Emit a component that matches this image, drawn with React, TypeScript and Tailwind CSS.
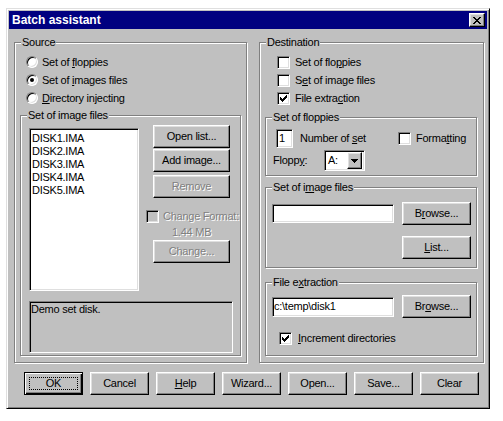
import React from "react";

const raised =
  "bg-[#c0c0c0] border border-t-white border-l-white border-r-black border-b-black shadow-[inset_-1px_-1px_0_#808080,inset_1px_1px_0_#dfdfdf]";
const sunken =
  "border border-t-[#808080] border-l-[#808080] border-r-white border-b-white shadow-[inset_1px_1px_0_#000,inset_-1px_-1px_0_#dfdfdf]";
const disabledText = "text-[#808080] [text-shadow:1px_1px_0_#fff]";

function Btn({
  children,
  className = "",
  disabled = false,
}: {
  children: React.ReactNode;
  className?: string;
  disabled?: boolean;
}) {
  return (
    <div
      className={`flex items-center justify-center ${raised} ${
        disabled ? disabledText : "text-black"
      } ${className}`}
    >
      {children}
    </div>
  );
}

function Group({
  label,
  className = "",
  children,
}: {
  label: React.ReactNode;
  className?: string;
  children?: React.ReactNode;
}) {
  return (
    <div
      className={`relative border border-[#808080] shadow-[1px_1px_0_#fff,inset_1px_1px_0_#fff] ${className}`}
    >
      <span className="absolute left-[6px] -top-[7px] px-[1px] bg-[#c0c0c0] leading-[13px] whitespace-nowrap">
        {label}
      </span>
      {children}
    </div>
  );
}

function Check({ checked = false, disabled = false }: { checked?: boolean; disabled?: boolean }) {
  return (
    <div
      className={`w-[13px] h-[13px] shrink-0 flex items-center justify-center ${sunken} ${
        disabled ? "bg-[#c0c0c0]" : "bg-white"
      }`}
    >
      {checked && (
        <svg width="7" height="7" viewBox="0 0 7 7" shapeRendering="crispEdges">
          <path
            fill="#000"
            d="M6 0h1v1h-1z M5 1h2v1h-2z M0 2h1v1h-1z M4 2h3v1h-3z M0 3h2v1h-2z M3 3h3v1h-3z M0 4h5v1h-5z M1 5h3v1h-3z M2 6h1v1h-1z"
          />
        </svg>
      )}
    </div>
  );
}

function Radio({ checked = false }: { checked?: boolean }) {
  return (
    <div className="w-[12px] h-[12px] shrink-0 rounded-full bg-white border border-t-[#808080] border-l-[#808080] border-r-white border-b-white shadow-[inset_1px_1px_0_#000,inset_-1px_-1px_0_#dfdfdf] flex items-center justify-center">
      {checked && <div className="w-[4px] h-[4px] rounded-full bg-black" />}
    </div>
  );
}

function U({ children }: { children: React.ReactNode }) {
  return <span className="underline underline-offset-[1px]">{children}</span>;
}

export default function App() {
  return (
    <div className="w-[503px] h-[421px] bg-white pt-[8px] pl-[6px] font-['Liberation_Sans',Arial,sans-serif] text-[11px] leading-[13px] tracking-[-0.25px] text-black">
      <div className="w-[484px] h-[401px] bg-[#c0c0c0] border border-t-[#dfdfdf] border-l-[#dfdfdf] border-r-black border-b-black shadow-[inset_1px_1px_0_#fff,inset_-1px_-1px_0_#808080] p-[2px] flex flex-col">
        {/* Title bar */}
        <div className="h-[18px] bg-[#000080] flex items-center justify-between pl-[3px]">
          <span className="text-white font-bold text-[12px] leading-[14px] tracking-normal">Batch assistant</span>
          <div className={`w-[16px] h-[14px] mr-[2px] flex items-center justify-center ${raised}`}>
            <svg width="8" height="7" viewBox="0 0 8 7" shapeRendering="crispEdges">
              <path
                fill="#000"
                d="M0 0h2v1h-2z M6 0h2v1h-2z M1 1h2v1h-2z M5 1h2v1h-2z M2 2h4v1h-4z M3 3h2v1h-2z M2 4h4v1h-4z M1 5h2v1h-2z M5 5h2v1h-2z M0 6h2v1h-2z M6 6h2v1h-2z"
              />
            </svg>
          </div>
        </div>

        {/* Main area */}
        <div className="flex mt-[13px] ml-[5px]">
          {/* Source */}
          <Group label="Source" className="w-[233px] h-[321px]">
            <div className="flex flex-col pt-[10px] pl-[11px]">
              <div className="h-[18px] flex items-center gap-[4px]">
                <Radio />
                <span>
                  Set of <U>f</U>loppies
                </span>
              </div>
              <div className="h-[18px] flex items-center gap-[4px]">
                <Radio checked />
                <span>
                  Set of <U>i</U>mages files
                </span>
              </div>
              <div className="h-[18px] flex items-center gap-[4px]">
                <Radio />
                <span>
                  <U>D</U>irectory injecting
                </span>
              </div>
            </div>
            <Group label="Set of image files" className="ml-[5px] mt-[8px] w-[221px] h-[241px]">
              <div className="flex">
                <div className={`ml-[8px] mt-[12px] w-[110px] h-[163px] bg-white pt-[3px] pl-[2px] ${sunken}`}>
                  <div>DISK1.IMA</div>
                  <div>DISK2.IMA</div>
                  <div>DISK3.IMA</div>
                  <div>DISK4.IMA</div>
                  <div>DISK5.IMA</div>
                </div>
                <div className="ml-[7px] mt-[9px] flex flex-col w-[84px]">
                  <Btn className="ml-[7px] w-[77px] h-[23px]">Open list...</Btn>
                  <Btn className="ml-[7px] mt-[1px] w-[77px] h-[23px]">Add image...</Btn>
                  <Btn disabled className="ml-[7px] mt-[3px] w-[77px] h-[23px]">
                    Remove
                  </Btn>
                  <div className="mt-[12px] h-[13px] flex items-center gap-[4px]">
                    <Check disabled />
                    <span className={`whitespace-nowrap ${disabledText}`}>Change Format:</span>
                  </div>
                  <div className={`mt-[3px] ml-[26px] ${disabledText}`}>1.44 MB</div>
                  <Btn disabled className="ml-[7px] mt-[1px] w-[77px] h-[23px]">
                    Change...
                  </Btn>
                </div>
              </div>
              <div className={`ml-[8px] mt-[10px] w-[204px] h-[52px] bg-[#c0c0c0] pt-[1px] pl-[1px] border border-t-[#808080] border-l-[#808080] border-r-white border-b-white shadow-[inset_1px_1px_0_#000,inset_-1px_-1px_0_#c0c0c0]`}>
                Demo set disk.
              </div>
            </Group>
          </Group>

          {/* Destination */}
          <Group label="Destination" className="ml-[12px] w-[225px] h-[321px]">
            <div className="flex flex-col pt-[10px] pl-[17px]">
              <div className="h-[18px] flex items-center gap-[5px]">
                <Check />
                <span>
                  Set of flo<U>p</U>pies
                </span>
              </div>
              <div className="h-[18px] flex items-center gap-[5px]">
                <Check />
                <span>
                  S<U>e</U>t of image files
                </span>
              </div>
              <div className="h-[18px] flex items-center gap-[5px]">
                <Check checked />
                <span>
                  File extra<U>c</U>tion
                </span>
              </div>
            </div>

            <Group label="Set of floppies" className="ml-[5px] mt-[10px] w-[212px] h-[59px]">
              <div className="mt-[11px] pl-[10px] h-[19px] flex items-center">
                <div className={`w-[17px] h-[19px] bg-white pl-[2px] flex items-center ${sunken}`}>1</div>
                <span className="ml-[7px] w-[91px] whitespace-nowrap">
                  Number of <U>s</U>et
                </span>
                <div className="ml-[7px] flex items-center gap-[5px]">
                  <Check />
                  <span>
                    Forma<U>t</U>ting
                  </span>
                </div>
              </div>
              <div className="mt-[2px] pl-[7px] h-[21px] flex items-center">
                <span className="w-[51px]">
                  Flopp<U>y</U>:
                </span>
                <div className={`w-[41px] h-[21px] bg-white flex items-center justify-between ${sunken} p-[2px]`}>
                  <span className="pl-[1px]">A:</span>
                  <div className={`w-[15px] h-[17px] flex items-center justify-center ${raised}`}>
                    <svg width="7" height="4" viewBox="0 0 7 4" shapeRendering="crispEdges">
                      <path fill="#000" d="M0 0h7v1h-7z M1 1h5v1h-5z M2 2h3v1h-3z M3 3h1v1h-1z" />
                    </svg>
                  </div>
                </div>
              </div>
            </Group>

            <Group
              label={
                <span>
                  Set of i<U>m</U>age files
                </span>
              }
              className="ml-[5px] mt-[11px] w-[212px] h-[81px]"
            >
              <div className="mt-[14px] pl-[6px] h-[23px] flex items-center">
                <div className={`w-[122px] h-[19px] bg-white ${sunken}`} />
                <Btn className="ml-[8px] w-[69px] h-[23px]">
                  <span>
                    B<U>r</U>owse...
                  </span>
                </Btn>
              </div>
              <Btn className="mt-[11px] ml-[136px] w-[69px] h-[23px]">
                <span>
                  <U>L</U>ist...
                </span>
              </Btn>
            </Group>

            <Group
              label={
                <span>
                  File e<U>x</U>traction
                </span>
              }
              className="ml-[5px] mt-[14px] w-[212px] h-[74px]"
            >
              <div className="mt-[12px] pl-[6px] h-[23px] flex items-center">
                <div className={`w-[122px] h-[20px] bg-white pl-[1px] flex items-center ${sunken}`}>
                  c:\temp\disk1
                </div>
                <Btn className="ml-[8px] w-[69px] h-[23px]">
                  <span>
                    Br<U>o</U>wse...
                  </span>
                </Btn>
              </div>
              <div className="mt-[14px] pl-[13px] h-[13px] flex items-center gap-[6px]">
                <Check checked />
                <span>
                  <U>I</U>ncrement directories
                </span>
              </div>
            </Group>
          </Group>
        </div>

        {/* Bottom buttons */}
        <div className="flex mt-[9px] ml-[15px] gap-[7px]">
          <div className="relative w-[59px] h-[23px] flex items-center justify-center bg-[#c0c0c0] border border-black shadow-[inset_1px_1px_0_#fff,inset_-1px_-1px_0_#000,inset_-2px_-2px_0_#808080]">
            <div className="absolute left-[4px] top-[4px] right-[4px] bottom-[4px] border border-dotted border-black" />
            OK
          </div>
          <Btn className="w-[59px] h-[23px]">Cancel</Btn>
          <Btn className="w-[59px] h-[23px]">
            <span>
              <U>H</U>elp
            </span>
          </Btn>
          <Btn className="w-[59px] h-[23px]">Wizard...</Btn>
          <Btn className="w-[59px] h-[23px]">Open...</Btn>
          <Btn className="w-[59px] h-[23px]">Save...</Btn>
          <Btn className="w-[59px] h-[23px]">Clear</Btn>
        </div>
      </div>
    </div>
  );
}
